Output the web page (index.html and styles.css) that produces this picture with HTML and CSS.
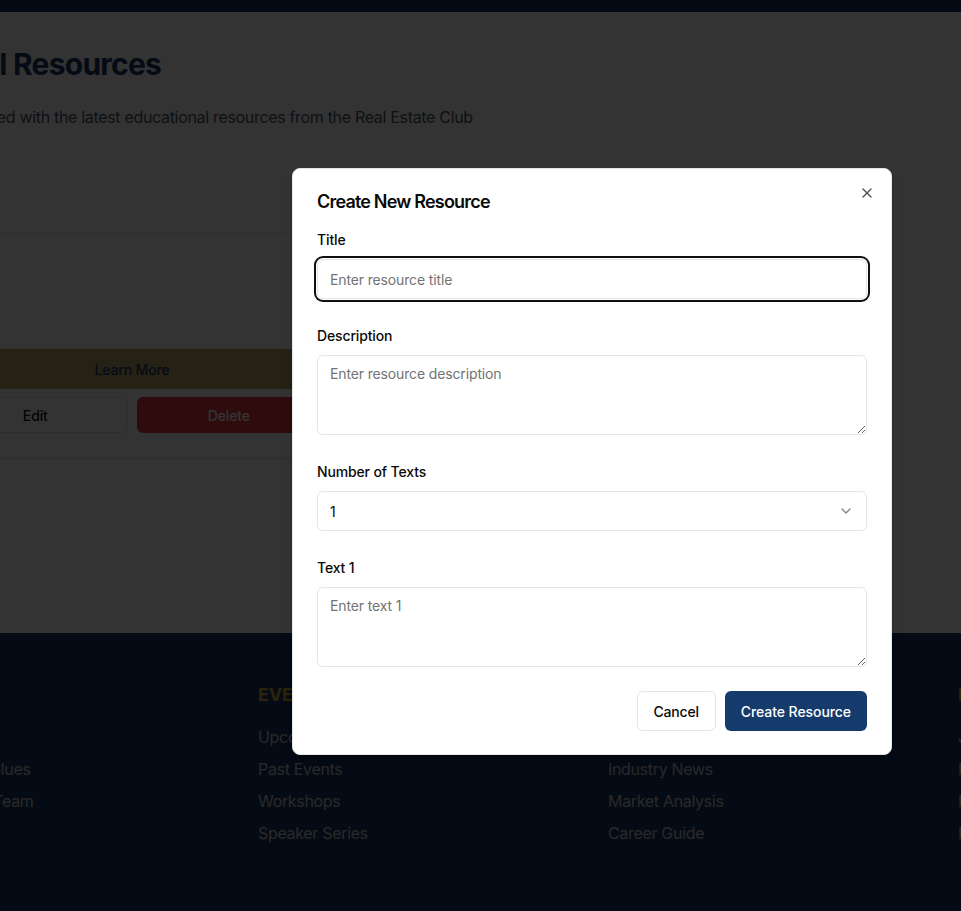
FILE: index.html
```html
<!DOCTYPE html>
<html lang="en">
<head>
<meta charset="utf-8">
<title>Educational Resources</title>
<link rel="stylesheet" href="styles.css">
</head>
<body>
<div class="page">
  <header class="nav"></header>
  <main class="main">
    <section class="hero">
      <h1 class="hero-title">Educational Resources</h1>
      <p class="hero-sub">Stay sharp and updated with the latest educational resources from the Real Estate Club</p>
    </section>
    <section class="grid">
      <article class="card">
        <h3 class="card-title">Test</h3>
        <p class="card-desc">test</p>
        <a class="btn-learn">Learn More</a>
        <div class="card-actions">
          <button class="btn-edit">Edit</button>
          <button class="btn-delete">Delete</button>
        </div>
      </article>
    </section>
  </main>
  <footer class="footer">
    <div class="footer-grid">
      <div class="footer-col">
        <h4 class="footer-head">About</h4>
        <ul class="footer-links">
          <li>About Us</li>
          <li>Mission &amp; Values</li>
          <li>Leadership Team</li>
          <li>Contact</li>
        </ul>
      </div>
      <div class="footer-col">
        <h4 class="footer-head">Events</h4>
        <ul class="footer-links">
          <li>Upcoming Events</li>
          <li>Past Events</li>
          <li>Workshops</li>
          <li>Speaker Series</li>
        </ul>
      </div>
      <div class="footer-col">
        <h4 class="footer-head">Resources</h4>
        <ul class="footer-links">
          <li>Educational Materials</li>
          <li>Industry News</li>
          <li>Market Analysis</li>
          <li>Career Guide</li>
        </ul>
      </div>
      <div class="footer-col">
        <h4 class="footer-head">Membership</h4>
        <ul class="footer-links">
          <li>Join Now</li>
          <li>Benefits</li>
          <li>Partners</li>
          <li>FAQ</li>
        </ul>
      </div>
    </div>
  </footer>

  <div class="overlay">
    <div class="modal" role="dialog">
      <h2 class="modal-title">Create New Resource</h2>
      <button class="modal-close" aria-label="Close">
        <svg width="16" height="16" viewBox="0 0 24 24" fill="none" stroke="currentColor" stroke-width="2" stroke-linecap="round" stroke-linejoin="round"><path d="M18 6 6 18"/><path d="m6 6 12 12"/></svg>
      </button>
      <div class="field first">
        <label class="label">Title</label>
        <input class="input focused" type="text" placeholder="Enter resource title">
      </div>
      <div class="field">
        <label class="label">Description</label>
        <textarea class="textarea" placeholder="Enter resource description"></textarea>
      </div>
      <div class="field">
        <label class="label">Number of Texts</label>
        <div class="select">
          <span>1</span>
          <svg class="chev" width="16" height="16" viewBox="0 0 24 24" fill="none" stroke="currentColor" stroke-width="2" stroke-linecap="round" stroke-linejoin="round"><path d="m6 9 6 6 6-6"/></svg>
        </div>
      </div>
      <div class="field">
        <label class="label">Text 1</label>
        <textarea class="textarea" placeholder="Enter text 1"></textarea>
      </div>
      <div class="modal-actions">
        <button class="btn-cancel">Cancel</button>
        <button class="btn-create">Create Resource</button>
      </div>
    </div>
  </div>
</div>
</body>
</html>
```

FILE: styles.css
```css
* { box-sizing: border-box; }

html, body {
  margin: 0;
  padding: 0;
  overflow: hidden;
}

body {
  font-family: Inter, "Noto Sans", "Liberation Sans", sans-serif;
  background: #ffffff;
  color: #0a0a0a;
}

.page {
  position: relative;
  width: 1400px;
  height: 911px;
  margin-left: -108px;
}

.nav {
  height: 12px;
  background: #1b3a64;
}

.main {
  height: 621px;
  padding-top: 34px;
  background: #ffffff;
}

.hero {
  margin-left: -50px;
}

.hero-title {
  margin: 0;
  font-size: 30px;
  line-height: 36px;
  font-weight: 700;
  letter-spacing: -0.025em;
  color: #1b3a64;
}

.hero-sub {
  margin: 23px 0 0;
  font-size: 16px;
  line-height: 24px;
  letter-spacing: -0.02em;
  color: #4b5563;
}

.grid {
  display: grid;
  grid-template-columns: repeat(3, 1fr);
  gap: 32px;
  padding: 0 26px;
  margin-top: 104px;
}

.card {
  display: flex;
  flex-direction: column;
  border: 1px solid #e5e7eb;
  border-radius: 8px;
  padding: 24px;
  background: #fff;
  box-shadow: 0 1px 3px rgba(0,0,0,0.1);
}

.card-title {
  margin: 0;
  font-size: 20px;
  line-height: 28px;
  font-weight: 600;
  color: #1b3a64;
}

.card-desc {
  margin: 8px 0 0;
  font-size: 14px;
  line-height: 20px;
  color: #4b5563;
}

.btn-learn {
  display: flex;
  align-items: center;
  justify-content: center;
  height: 40px;
  margin-top: 35px;
  background: #bfa66a;
  color: #1b3a64;
  font-size: 14px;
  font-weight: 500;
  letter-spacing: -0.01em;
  border-radius: 6px;
}

.card-actions {
  display: grid;
  grid-template-columns: 1fr 1fr;
  gap: 9px;
  margin-top: 8px;
}

.btn-edit, .btn-delete {
  height: 36px;
  border-radius: 6px;
  font-family: inherit;
  font-size: 14px;
  font-weight: 500;
  letter-spacing: -0.01em;
}

.btn-edit {
  background: #fff;
  border: 1px solid #e5e7eb;
  color: #0a0a0a;
}

.btn-delete {
  background: #e53e3e;
  border: none;
  color: #fff;
}

.footer {
  height: 278px;
  background: #1b3a64;
  padding: 48px 16px 0;
}

.footer-grid {
  display: grid;
  grid-template-columns: repeat(4, 1fr);
  gap: 32px;
}

.footer-head {
  margin: 0 0 16px;
  font-size: 18px;
  line-height: 28px;
  font-weight: 700;
  letter-spacing: -0.01em;
  text-transform: uppercase;
  color: #d4af37;
}

.footer-links {
  list-style: none;
  margin: 0;
  padding: 0;
  display: flex;
  flex-direction: column;
  gap: 8px;
}

.footer-links li {
  font-size: 16px;
  line-height: 24px;
  letter-spacing: -0.02em;
  color: #c9ccd1;
}

/* modal */
.overlay {
  position: absolute;
  inset: 0;
  background: rgba(0, 0, 0, 0.8);
  display: flex;
  align-items: center;
  justify-content: center;
  padding-top: 12px;
}

.modal {
  position: relative;
  width: 600px;
  background: #fff;
  border: 1px solid #e5e5e5;
  border-radius: 8px;
  padding: 19px 24px 23px;
  box-shadow: 0 10px 15px -3px rgba(0,0,0,0.1), 0 4px 6px -4px rgba(0,0,0,0.1);
}

.modal-title {
  margin: 0;
  font-size: 18px;
  line-height: 28px;
  font-weight: 600;
  letter-spacing: -0.045em;
  color: #0a0a0a;
}

.modal-close {
  position: absolute;
  top: 16px;
  right: 16px;
  width: 16px;
  height: 16px;
  padding: 0;
  border: none;
  background: none;
  color: #0a0a0a;
  opacity: 0.7;
  display: flex;
}

.field {
  margin-top: 27px;
}

.field.first {
  margin-top: 14px;
}

.label {
  display: block;
  font-size: 14px;
  line-height: 20px;
  font-weight: 500;
  letter-spacing: -0.01em;
  color: #0a0a0a;
  margin-bottom: 9px;
}

.input, .textarea, .select {
  display: block;
  width: 100%;
  border: 1px solid #e5e5e5;
  border-radius: 6px;
  background: #fff;
  font-family: inherit;
  font-size: 14px;
  letter-spacing: -0.01em;
  color: #0a0a0a;
  padding: 0 12px;
}

.input {
  height: 40px;
}

.input.focused {
  box-shadow: 0 0 0 1px #fff, 0 0 0 3px #101010;
}

.textarea {
  height: 80px;
  padding: 8px 12px;
  line-height: 20px;
  resize: vertical;
}

.input::placeholder, .textarea::placeholder {
  color: #737373;
}

.select {
  height: 40px;
  display: flex;
  align-items: center;
  justify-content: space-between;
}

.chev {
  color: #0a0a0a;
  opacity: 0.5;
}

.modal-actions {
  display: flex;
  justify-content: flex-end;
  gap: 9px;
  margin-top: 24px;
}

.btn-cancel, .btn-create {
  height: 40px;
  padding: 0 16px;
  border-radius: 6px;
  font-family: inherit;
  font-size: 14px;
  font-weight: 500;
}

.btn-cancel {
  background: #fff;
  border: 1px solid #e5e5e5;
  color: #0a0a0a;
  letter-spacing: -0.015em;
}

.btn-create {
  background: #143b6c;
  border: none;
  color: #fff;
  letter-spacing: -0.005em;
}
```
